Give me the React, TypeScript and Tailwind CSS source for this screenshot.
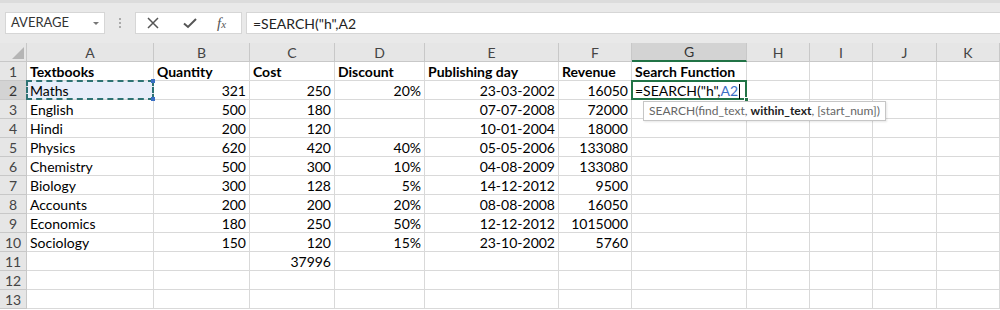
import React from "react";

const cols = ["A", "B", "C", "D", "E", "F", "G", "H", "I", "J", "K"];

const data: (string | null)[][] = [
  ["Textbooks", "Quantity", "Cost", "Discount", "Publishing day", "Revenue", "Search Function"],
  ["Maths", "321", "250", "20%", "23-03-2002", "16050", null],
  ["English", "500", "180", "", "07-07-2008", "72000", ""],
  ["Hindi", "200", "120", "", "10-01-2004", "18000", ""],
  ["Physics", "620", "420", "40%", "05-05-2006", "133080", ""],
  ["Chemistry", "500", "300", "10%", "04-08-2009", "133080", ""],
  ["Biology", "300", "128", "5%", "14-12-2012", "9500", ""],
  ["Accounts", "200", "200", "20%", "08-08-2008", "16050", ""],
  ["Economics", "180", "250", "50%", "12-12-2012", "1015000", ""],
  ["Sociology", "150", "120", "15%", "23-10-2002", "5760", ""],
  ["", "", "37996", "", "", "", ""],
  ["", "", "", "", "", "", ""],
  ["", "", "", "", "", "", ""],
];

const font = { fontFamily: "Lato, 'Open Sans', sans-serif" };

export default function App() {
  return (
    <div className="w-[1000px] h-[310px] overflow-hidden bg-white relative" style={font}>
      {/* Formula bar */}
      <div className="h-[43px] bg-[#e9e9e9] flex items-center border-t-[3px] border-[#dcdcdc] pl-[5px]">
        <div className="w-[100px] h-[22px] bg-white border border-[#d6d6d6] flex items-center justify-between pl-[5px] pr-[5px] text-[13px] text-[#333]">
          <span>AVERAGE</span>
          <span className="w-0 h-0 border-l-[3px] border-r-[3px] border-t-[3px] border-l-transparent border-r-transparent border-t-[#777]" />
        </div>
        <div className="w-[30px] flex flex-col items-center gap-[2px]">
          <span className="w-[2px] h-[2px] bg-[#aaa]" />
          <span className="w-[2px] h-[2px] bg-[#aaa]" />
          <span className="w-[2px] h-[2px] bg-[#aaa]" />
        </div>
        <div className="w-[107px] h-[22px] bg-white border border-[#d6d6d6] flex items-center text-[#555]">
          <svg width="14" height="14" viewBox="0 0 14 14" className="ml-[10px]">
            <path d="M2 2 L12 12 M12 2 L2 12" stroke="#555" strokeWidth="1.5" fill="none" />
          </svg>
          <svg width="16" height="14" viewBox="0 0 16 14" className="ml-[22px]">
            <path d="M2 7.5 L6 11 L14 3" stroke="#555" strokeWidth="2" fill="none" />
          </svg>
          <span
            className="ml-[19px] text-[15px] italic text-[#555]"
            style={{ fontFamily: "'Liberation Serif', serif" }}
          >
            f<span className="text-[11px]">x</span>
          </span>
        </div>
        <div className="ml-[4px] flex-1 h-[22px] bg-white border border-[#d6d6d6] border-r-0 flex items-center pl-[6px] text-[14px] text-[#222]">
          =SEARCH("h",A2
        </div>
      </div>

      {/* Grid */}
      <div className="grid grid-cols-[27px_127px_96px_85px_90px_134px_73px_115px_63px_63px_64px_63px] text-[14px] text-black">
        {/* corner */}
        <div className="h-[19px] bg-[#e6e6e6] border-r border-b border-[#c8c8c8] flex items-end justify-end pr-[2px] pb-[2px]">
          <svg width="12" height="12" viewBox="0 0 12 12">
            <path d="M12 0 L12 12 L0 12 Z" fill="#b5b5b5" />
          </svg>
        </div>
        {cols.map((c) => (
          <div
            key={c}
            className={
              c === "G"
                ? "h-[19px] bg-[#d3d3d3] border-r border-[#c8c8c8] border-b-2 border-b-[#217346] flex items-center justify-center text-[14px] text-[#333]"
                : "h-[19px] bg-[#e6e6e6] border-r border-b border-[#c8c8c8] flex items-center justify-center text-[14px] text-[#444]"
            }
          >
            {c}
          </div>
        ))}

        {data.map((row, ri) => (
          <React.Fragment key={ri}>
            <div
              className={
                ri === 1
                  ? "h-[19px] bg-[#d3d3d3] border-r border-b border-[#c8c8c8] flex items-center justify-center text-[14px] text-[#333]"
                  : "h-[19px] bg-[#e6e6e6] border-r border-b border-[#c8c8c8] flex items-center justify-center text-[14px] text-[#444]"
              }
            >
              {ri + 1}
            </div>
            {cols.map((c, ci) => {
              const v = ci < 7 ? row[ci] : "";
              const isHeader = ri === 0;
              const right = !isHeader && ci >= 1 && ci <= 5;
              const a2 = ri === 1 && ci === 0;
              const g2 = ri === 1 && ci === 6;
              return (
                <div
                  key={c}
                  className={
                    "h-[19px] border-r border-b border-[#d9d9d9] flex items-center px-[3px] whitespace-nowrap relative " +
                    (right ? "justify-end " : "") +
                    (isHeader ? "font-bold " : "") +
                    (a2 ? "bg-[#e8eefa] " : "")
                  }
                >
                  {g2 ? (
                    <span className="relative z-20">
                      =SEARCH("h",<span className="text-[#3a6fc4]">A2</span>
                      <span className="inline-block w-[1px] h-[15px] bg-black align-middle ml-[1px]" />
                    </span>
                  ) : (
                    v
                  )}
                  {a2 && (
                    <span className="absolute left-[-1px] top-[-1px] right-[-1px] bottom-[-1px] border-2 border-dashed border-[#2d7374] z-10">
                      <span className="absolute right-[-3px] top-[-3px] w-[4px] h-[4px] bg-[#3a6fc4]" />
                      <span className="absolute right-[-3px] bottom-[-3px] w-[4px] h-[4px] bg-[#3a6fc4]" />
                    </span>
                  )}
                  {g2 && (
                    <span className="absolute left-[-1px] top-[-1px] right-[-1px] bottom-[-1px] border-2 border-[#217346] z-10">
                      <span className="absolute right-[-4px] bottom-[-4px] w-[5px] h-[5px] bg-[#217346] border border-white" />
                    </span>
                  )}
                </div>
              );
            })}
          </React.Fragment>
        ))}
      </div>

      {/* Tooltip */}
      <div className="absolute left-[643px] top-[101px] h-[20px] bg-white border border-[#c6c6c6] flex items-center px-[5px] text-[12px] text-[#666] whitespace-nowrap shadow-[1px_1px_2px_rgba(0,0,0,0.1)] z-30">
        SEARCH(find_text,&nbsp;<b className="text-[#222] font-bold">within_text</b>, [start_num])
      </div>
    </div>
  );
}
